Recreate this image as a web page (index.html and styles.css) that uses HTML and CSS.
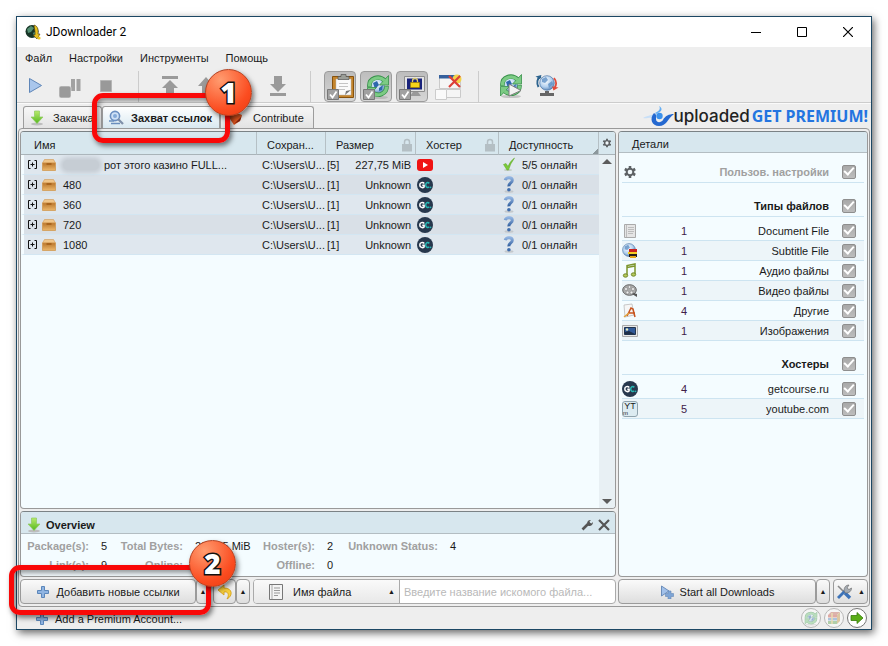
FILE: index.html
```html
<!DOCTYPE html>
<html lang="ru">
<head>
<meta charset="utf-8">
<title>JDownloader 2</title>
<link rel="stylesheet" href="styles.css">
</head>
<body>
<svg class="defs" aria-hidden="true">
  <defs>
    <linearGradient id="gGreen" x1="0" y1="0" x2="0" y2="1"><stop offset="0" stop-color="#b8ea6c"/><stop offset="1" stop-color="#55b81e"/></linearGradient>
    <linearGradient id="gBox" x1="0" y1="0" x2="0" y2="1"><stop offset="0" stop-color="#b9752a"/><stop offset="1" stop-color="#ecb86c"/></linearGradient>
    <linearGradient id="gBlue" x1="0" y1="0" x2="0" y2="1"><stop offset="0" stop-color="#8fb2e0"/><stop offset="1" stop-color="#33609f"/></linearGradient>
    <radialGradient id="gGlobe" cx=".4" cy=".35" r=".7"><stop offset="0" stop-color="#fff"/><stop offset=".6" stop-color="#b3d0ee"/><stop offset="1" stop-color="#5580b4"/></radialGradient>
    <symbol id="down" viewBox="0 0 14 16"><ellipse cx="7" cy="14" rx="6" ry="1.5" fill="#bdbdbd"/><path d="M4.500 1h5v6H13l-6 6.500L1 7h3.500z" fill="url(#gGreen)" stroke="#8cc860" stroke-width=".7"/></symbol>
    <symbol id="box" viewBox="0 0 14 14"><path d="M2.500 1.500h9l2 3.500H.5z" fill="#f0c68a" stroke="#d09b58" stroke-width=".6"/><path d="M.5 5h13v7.500H.5z" fill="url(#gBox)" stroke="#cf9347" stroke-width=".7"/><path d="M4.500 5h5v2h-5z" fill="#a8641d"/></symbol>
    <symbol id="expand" viewBox="0 0 9 9"><path d="M2.500.5H.5v8h2M6.500.5h2v8h-2M2.500 4.500h4M4.500 2.500v4" fill="none" stroke="#111"/></symbol>
    <symbol id="gc" viewBox="0 0 16 16"><circle cx="8" cy="8" r="8" fill="#27384d"/><path d="M7.300 6.400C5.700 4.700 2.800 5.500 2.800 8s2.900 3.300 4.300 1.900V8.200H5.300" fill="none" stroke="#fff" stroke-width="1.500"/><path d="M12.300 6.400C10.800 4.700 8.700 5.700 8.700 8s2.100 3.300 3.600 1.700" fill="none" stroke="#28b5b2" stroke-width="1.600"/><circle cx="13.600" cy="10.400" r=".8" fill="#28b5b2"/></symbol>
    <symbol id="help" viewBox="0 0 12 17"><ellipse cx="6" cy="15.500" rx="4.500" ry="1.200" fill="#c3c8cc"/><path d="M2.200 4.200C3 1 9.300 1 9.300 4.300c0 2.700-3.600 2.700-3.400 6" fill="none" stroke="url(#gBlue)" stroke-width="3"/><circle cx="5.900" cy="13.700" r="1.800" fill="#3f6cab"/></symbol>
    <symbol id="lock" viewBox="0 0 12 14"><path d="M3.500 7V4a2.500 2.500 0 0 1 5 0v3" fill="none" stroke="#b4bfc4" stroke-width="1.500"/><path d="M1 6h10v7.500H1z" fill="#b4bfc4"/></symbol>
    <symbol id="gear" viewBox="0 0 14 14"><path d="M7 1v12M1.800 4l10.400 6M12.200 4L1.800 10" stroke="#5d6164" stroke-width="2.600"/><circle cx="7" cy="7" r="4.300" fill="#5d6164"/><circle cx="7" cy="7" r="2.300" fill="#f0f7fa"/></symbol>
    <symbol id="plus" viewBox="0 0 14 14"><path d="M5.500 1.500h3v4h4v3h-4v4h-3v-4h-4v-3h4z" fill="#8fb4e2" stroke="#5b86ba"/></symbol>
    <symbol id="globe" viewBox="0 0 16 16"><circle cx="8" cy="8" r="7.300" fill="url(#gGlobe)" stroke="#4a76a8" stroke-width=".7"/><path d="M3 4l4-2 2 3-3 3-3-1zM9 9l4-3 1 3-4 4z" fill="#5c8fc4" opacity=".8"/></symbol>
    <symbol id="sync" viewBox="0 0 24 26"><ellipse cx="12" cy="23.500" rx="10" ry="1.600" fill="#aaa" opacity=".6"/><circle cx="12" cy="12" r="7" fill="url(#gGlobe)"/><path d="M7 9l4-2 2 4-4 4zM13 14l4-3-1 5-3 1z" fill="#2e68ad"/><g fill="none" stroke="#37904a" stroke-width="4.600"><path d="M3.500 13C2.500 3.500 13 1 18.500 6.500"/><path d="M20.500 12c.5 8-9 11.500-15 6"/></g><path d="M22.500 1.500v9.500h-9zM1.500 23v-9.500h9z" fill="#7ccb84" stroke="#37904a" stroke-width=".8"/><g fill="none" stroke="#7ccb84" stroke-width="3.200"><path d="M3.500 12.500C3 4 13 1.500 18.500 6.500"/><path d="M20.500 12.500c0 7.500-9 11-15 5.500"/></g></symbol>
  </defs>
</svg>

<main class="window">
  <header class="titlebar">
    <svg class="logo" viewBox="0 0 16 16"><circle cx="7" cy="7.500" r="6.500" fill="#173526"/><path d="M2 5l4-3 3 2-3 4-3 1zM8 9l3-2 1 3-3 3z" fill="#548f72"/><path d="M9 1c4 1 4.500 5 4 9h2l-3 5-4-4h2c.6-4-1-7-1-10z" fill="#e8c220" stroke="#44380c" stroke-width=".6"/><circle cx="14" cy="14" r="1.600" fill="#ebc524"/></svg>
    <h1>JDownloader 2</h1>
    <div class="wincontrols">
      <button aria-label="Minimize"><svg viewBox="0 0 10 10"><path d="M0 5.500h10" stroke="#000"/></svg></button>
      <button aria-label="Maximize"><svg viewBox="0 0 10 10"><path d="M.5.5h9v9h-9z" fill="none" stroke="#000"/></svg></button>
      <button aria-label="Close"><svg viewBox="0 0 10 10"><path d="M0 0l10 10M10 0L0 10" stroke="#000" stroke-width="1.200"/></svg></button>
    </div>
  </header>
  <nav class="menu"><a href="#">Файл</a><a href="#">Настройки</a><a href="#">Инструменты</a><a href="#">Помощь</a></nav>

  <div class="toolbar">
    <button aria-label="Start"><svg width="16" height="18" viewBox="0 0 16 18"><path d="M1.500 1.500v14L13.500 8.500z" fill="#a9c6ec" stroke="#5f86b8"/></svg></button>
    <button class="low" aria-label="Pause"><svg width="24" height="22" viewBox="0 0 24 22"><path d="M13 2h4v12h-4zM18.500 2h4v12h-4z" fill="#a2a2a2"/><rect x="1" y="9" width="12" height="12" rx="2" fill="#9a9a9a" stroke="#eee" stroke-width=".6"/></svg></button>
    <button aria-label="Stop"><svg width="12" height="12" viewBox="0 0 12 12"><path d="M.5.5h11v11H.5z" fill="#999" stroke="#b5b5b5"/></svg></button>
    <span class="sep"></span>
    <button aria-label="Move to top"><svg width="20" height="22" viewBox="0 0 20 22"><path d="M2 1h16v3H2zM10 5l8 8h-4v8H6v-8H2z" fill="#9a9a9a"/></svg></button>
    <button aria-label="Move up"><svg width="20" height="22" viewBox="0 0 20 22"><path d="M10 2l8 9h-4v9H6v-9H2z" fill="#9a9a9a"/></svg></button>
    <button aria-label="Move down"><svg width="20" height="22" viewBox="0 0 20 22"><path d="M6 2h8v9h4l-8 9-8-9h4z" fill="#9a9a9a"/></svg></button>
    <button aria-label="Move to bottom"><svg width="20" height="22" viewBox="0 0 20 22"><path d="M6 1h8v8h4l-8 8-8-8h4zM2 18h16v3H2z" fill="#9a9a9a"/></svg></button>
    <span class="sep"></span>
    <button class="toggle on" aria-label="Clipboard"><svg viewBox="0 0 30 29"><path d="M7.500 4.500h21v21h-21z" fill="#c5852c" stroke="#86520e"/><path d="M11 7h15v16H11z" fill="#fafafa" stroke="#bbb" stroke-width=".5"/><path d="M14 11.500h9M14 14.500h9M14 17.500h6" stroke="#c4c4c4"/><path d="M20 23l6-5-5 1z" fill="#777"/><path d="M13 4.500h3v-2h5v2h3v3H13z" fill="#9b9e98" stroke="#555" stroke-width=".7"/><path d="M2.500 17.500h11v10h-11z" fill="#a1a1a1" stroke="#787878"/><path d="M5 22.500l2.500 3 4-6" fill="none" stroke="#fff" stroke-width="1.800"/></svg></button>
    <button class="toggle on" aria-label="Auto reconnect"><svg viewBox="0 0 30 29"><use href="#sync" x="5" y="2" width="24" height="26"/><path d="M2.500 17.500h11v10h-11z" fill="#a1a1a1" stroke="#787878"/><path d="M5 22.500l2.500 3 4-6" fill="none" stroke="#fff" stroke-width="1.800"/></svg></button>
    <button class="toggle on" aria-label="Premium lock"><svg viewBox="0 0 30 29"><path d="M7.500 4.500h20v15h-20z" fill="#e4e4e4" stroke="#8d8d8d"/><path d="M10 6.500h15v11H10z" fill="#1a237b"/><path d="M16 20h5l3 4H13z" fill="#999"/><path d="M15.500 10.500V9a2.500 2.500 0 0 1 5 0v1.500" fill="none" stroke="#d9ca72" stroke-width="1.300"/><path d="M13.500 10.500h9v5h-9z" fill="#f6d31a" stroke="#a58200" stroke-width=".7"/><path d="M2.500 17.500h11v10h-11z" fill="#a1a1a1" stroke="#787878"/><path d="M5 22.500l2.500 3 4-6" fill="none" stroke="#fff" stroke-width="1.800"/></svg></button>
    <button class="toggle" aria-label="Silent mode"><svg viewBox="0 0 30 29"><path d="M6.500 4.500h21v12h-21zM13.500 17.500h14v8h-14z" fill="#f5f5f5" stroke="#cacaca"/><path d="M6 3h21v3.500H6z" fill="#35609d"/><circle cx="24" cy="7" r="4.500" fill="#f3d24a"/><path d="M16 4l11 11M27 4L16 15" stroke="#dc3f38" stroke-width="2.200"/><path d="M2.500 17.500h11v10h-11z" fill="#fafafa" stroke="#ccc"/></svg></button>
    <span class="sep"></span>
    <button class="big" aria-label="Reconnect"><svg width="24" height="26" viewBox="0 0 24 26"><use href="#sync" width="24" height="26"/><path d="M10 11v12l12-5.500z" fill="#f2f2f2" stroke="#7d7d7d"/></svg></button>
    <button class="big" aria-label="Update"><svg width="24" height="24" viewBox="0 0 24 24"><use href="#globe" x="4" y="1" width="16" height="16"/><path d="M10 17h4v2h5v3H5v-3h5z" fill="#666"/><path d="M6 2.500C2 4.500 1.500 9 3.500 13" fill="none" stroke="#2d638e" stroke-width="2"/><path d="M.5 2.500l6-1.500-1.500 4z" fill="#2d638e"/><path d="M19 4c2.500 3 2.500 7 .5 10" fill="none" stroke="#e14b3b" stroke-width="1.800"/><path d="M17 12.500l6.500 1-5 3z" fill="#e14b3b"/></svg></button>
  </div>

  <div class="tabs">
    <button class="tab first"><svg width="14" height="16"><use href="#down"/></svg><span>Закачка</span></button>
    <div class="tabwrap">
      <button class="tab active"><svg width="16" height="16" viewBox="0 0 16 16"><path d="M1 11h5M3 13.500h9" stroke="#6a8ebd" stroke-width="1.500"/><circle cx="7" cy="6" r="4.600" fill="#cfe1f6" stroke="#6b8fc1" stroke-width="1.600"/><circle cx="7" cy="6" r="2" fill="#84a9d8"/><path d="M10 9l5 5" stroke="#7f90a9" stroke-width="2.300"/></svg><span>Захват ссылок</span></button>
      <span class="ring ring-tab"></span><span class="badge badge-tab">1</span>
    </div>
    <button class="tab last"><svg width="14" height="14" viewBox="0 0 14 14"><path d="M1 2l5-1 7 3-2 6-6 4-4-6z" fill="#e4571f"/><path d="M5 13l7-7 1-2-2 6z" fill="#7b2511"/></svg><span>Contribute</span></button>
    <a class="banner" href="#"><svg width="32" height="22" viewBox="0 0 32 22"><path d="M0 13c5-3 7-2 11-4l-1 4c-4-1-6 1-10 0z" fill="#c8dff7"/><path d="M11 8c-5 6-2 13 5 13 8 0 8-7 15-12-5 0-9 2-11 6-2 3-7 3-7-1 0-3 1-4-2-6z" fill="#2468d0"/><circle cx="16.500" cy="11" r="3.200" fill="#3c91ec"/><path d="M12 8c4-2 6-4 4-7 5 3 2 6-3 8z" fill="#64aef4"/></svg><span class="brand">uploaded</span><span class="promo">GET PREMIUM!</span></a>
  </div>

  <div class="frame">
    <div class="left">
      <section class="panel links">
        <div class="tablebox">
          <table>
            <colgroup><col><col class="c-save"><col class="c-size"><col class="c-host"><col class="c-state"></colgroup>
            <thead><tr><th>Имя</th><th>Сохран...</th><th><span class="hcell">Размер<svg width="12" height="14"><use href="#lock"/></svg></span></th><th><span class="hcell">Хостер<svg width="12" height="14"><use href="#lock"/></svg></span></th><th class="sorted">Доступность</th></tr></thead>
            <tbody>
              <tr><td><span class="name"><svg width="9" height="9"><use href="#expand"/></svg><svg width="14" height="14"><use href="#box"/></svg><span class="label"><i class="smudge"></i>рот этого казино FULL...</span></span></td><td>C:\Users\U...</td><td><span class="size"><span>[5]</span><span>227,75 MiB</span></span></td><td class="host"><svg width="16" height="16" viewBox="0 0 16 16"><rect y="2" width="16" height="12" rx="3" fill="#f01414"/><path d="M6 5l5 3-5 3z" fill="#fff"/></svg></td><td><span class="state"><svg width="12" height="17" viewBox="0 0 12 17"><ellipse cx="5" cy="14" rx="4" ry="1" fill="#c2ccc2"/><path d="M.5 8.500L3 7.500l2 3Q7 5 11.500 2 7 8 5.500 14H4z" fill="#7ccb38" stroke="#59a522" stroke-width=".5"/></svg>5/5 онлайн</span></td></tr>
              <tr><td><span class="name"><svg width="9" height="9"><use href="#expand"/></svg><svg width="14" height="14"><use href="#box"/></svg><span class="label">480</span></span></td><td>C:\Users\U...</td><td><span class="size"><span>[1]</span><span>Unknown</span></span></td><td class="host"><svg width="16" height="16"><use href="#gc"/></svg></td><td><span class="state"><svg width="12" height="17"><use href="#help"/></svg>0/1 онлайн</span></td></tr>
              <tr><td><span class="name"><svg width="9" height="9"><use href="#expand"/></svg><svg width="14" height="14"><use href="#box"/></svg><span class="label">360</span></span></td><td>C:\Users\U...</td><td><span class="size"><span>[1]</span><span>Unknown</span></span></td><td class="host"><svg width="16" height="16"><use href="#gc"/></svg></td><td><span class="state"><svg width="12" height="17"><use href="#help"/></svg>0/1 онлайн</span></td></tr>
              <tr><td><span class="name"><svg width="9" height="9"><use href="#expand"/></svg><svg width="14" height="14"><use href="#box"/></svg><span class="label">720</span></span></td><td>C:\Users\U...</td><td><span class="size"><span>[1]</span><span>Unknown</span></span></td><td class="host"><svg width="16" height="16"><use href="#gc"/></svg></td><td><span class="state"><svg width="12" height="17"><use href="#help"/></svg>0/1 онлайн</span></td></tr>
              <tr><td><span class="name"><svg width="9" height="9"><use href="#expand"/></svg><svg width="14" height="14"><use href="#box"/></svg><span class="label">1080</span></span></td><td>C:\Users\U...</td><td><span class="size"><span>[1]</span><span>Unknown</span></span></td><td class="host"><svg width="16" height="16"><use href="#gc"/></svg></td><td><span class="state"><svg width="12" height="17"><use href="#help"/></svg>0/1 онлайн</span></td></tr>
            </tbody>
          </table>
        </div>
        <div class="scroll">
          <button class="colgear" aria-label="Columns"><svg width="10" height="10"><use href="#gear"/></svg></button>
          <svg width="10" height="5" viewBox="0 0 10 5"><path d="M5 0l5 5H0z" fill="#5b5b5b"/></svg>
          <svg class="bottom" width="10" height="5" viewBox="0 0 10 5"><path d="M0 0h10L5 5z" fill="#5b5b5b"/></svg>
        </div>
      </section>
      <section class="panel overview">
        <h2><svg width="14" height="16"><use href="#down"/></svg><span>Overview</span>
          <button aria-label="Settings"><svg width="12" height="12" viewBox="0 0 12 12"><path d="M1.500 10.500L7 5" stroke="#555" stroke-width="2.600"/><path d="M6 5c0-3 2-4.500 4-4L8.500 2.500l.6 1.300 1.300.6L12 3c0 3-2 4.500-4.500 4z" fill="#555"/></svg></button>
          <button aria-label="Close overview"><svg width="12" height="12" viewBox="0 0 12 12"><path d="M1 1l10 10M11 1L1 11" stroke="#555" stroke-width="2.200"/></svg></button></h2>
        <div class="stats">
          <b>Package(s):</b><span>5</span><b>Total Bytes:</b><span>227,75 MiB</span><b>Hoster(s):</b><span>2</span><b>Unknown Status:</b><span>4</span>
          <b>Link(s):</b><span>9</span><b>Online:</b><span>5</span><b>Offline:</b><span>0</span>
        </div>
      </section>
      <div class="actions">
        <div class="addgroup">
          <button class="btn add"><svg width="14" height="14"><use href="#plus"/></svg>Добавить новые ссылки</button><button class="btn up" aria-label="More add options">▲</button>
          <span class="ring ring-add"></span><span class="badge badge-add">2</span>
        </div>
        <div class="undogroup"><button class="btn undo" aria-label="Undo"><svg width="16" height="16" viewBox="0 0 16 16"><path d="M7 1L1 6l6 5V8c3-.6 5 1 4 5l-1 2c6-3 6-11-3-11z" fill="#f7cf3c" stroke="#d09b13" stroke-width=".8"/></svg></button><button class="btn up" aria-label="More undo options">▲</button></div>
        <div class="search">
          <label class="kind"><svg width="14" height="16" viewBox="0 0 14 16"><path d="M.5.500h13v15H.5z" fill="#f4f4f4" stroke="#777"/><path d="M3 1v14" stroke="#aaa"/><path d="M5 4h6M5 6.500h6M5 9h6M5 11.500h4" stroke="#999"/></svg><select aria-label="Поле поиска"><option>Имя файла</option></select><span>▲</span></label>
          <input type="text" aria-label="Поиск" placeholder="Введите название искомого файла...">
        </div>
      </div>
    </div>

    <div class="right">
      <section class="panel details">
        <h2>Детали</h2>
        <div class="filters">
          <label class="row head muted"><svg width="14" height="14"><use href="#gear"/></svg><span class="t">Пользов. настройки</span><input type="checkbox" checked></label>
          <label class="row head"><span class="t">Типы файлов</span><input type="checkbox" checked></label>
          <label class="row lead"><svg width="16" height="16" viewBox="0 0 16 16"><path d="M2.500 1.500h11v13h-11z" fill="#e5e5e5" stroke="#aaa"/><path d="M4.500 2v12M6 4.500h6M6 6.500h6M6 8.500h6M6 10.500h5" stroke="#bdbdbd"/></svg><span class="n">1</span><span class="t">Document File</span><input type="checkbox" checked></label>
          <label class="row alt"><svg width="16" height="16" viewBox="0 0 16 16"><use href="#globe" width="14" height="14"/><path d="M7 6h8v3H7z" fill="#c9201f"/><path d="M6 9h9v2H6z" fill="#f5cc24"/><path d="M7 11h8v3H7z" fill="#251c1c"/><path d="M8 13h6v2H8z" fill="#e5a81c"/></svg><span class="n">1</span><span class="t">Subtitle File</span><input type="checkbox" checked></label>
          <label class="row"><svg width="16" height="16" viewBox="0 0 16 16"><path d="M5 12V2.500L13 1v10M5 4.500L13 3" fill="none" stroke="#7c952e" stroke-width="1.500"/><ellipse cx="3.500" cy="12.500" rx="2.200" ry="1.700" fill="#b5c95b" stroke="#71882a"/><ellipse cx="11.500" cy="11.500" rx="2.200" ry="1.700" fill="#b5c95b" stroke="#71882a"/></svg><span class="n">1</span><span class="t">Аудио файлы</span><input type="checkbox" checked></label>
          <label class="row alt"><svg width="16" height="16" viewBox="0 0 16 16"><ellipse cx="7.500" cy="7" rx="6.800" ry="5.300" fill="#aaa" stroke="#666"/><g fill="#eee" stroke="#777" stroke-width=".5"><circle cx="4" cy="6" r="1.500"/><circle cx="7.500" cy="4" r="1.300"/><circle cx="11" cy="6" r="1.500"/><circle cx="5.500" cy="9.500" r="1.400"/><circle cx="9.500" cy="9.500" r="1.400"/></g><path d="M10 11l5 3v-3l-3-1z" fill="#555"/></svg><span class="n">1</span><span class="t">Видео файлы</span><input type="checkbox" checked></label>
          <label class="row"><svg width="16" height="16" viewBox="0 0 16 16"><path d="M2 2l8-1 2 11-9 2z" fill="#f6f6f6" stroke="#bbb" stroke-width=".8"/><path d="M5 13l4-8 2 1 2 8M6 10h7" fill="none" stroke="#c8541e" stroke-width="1.500"/><path d="M2 14l5-4" stroke="#dfa33c" stroke-width="1.500"/></svg><span class="n">4</span><span class="t">Другие</span><input type="checkbox" checked></label>
          <label class="row alt"><svg width="16" height="16" viewBox="0 0 16 16"><path d="M.5 2.500h15v11H.5z" fill="#e8e8e8" stroke="#aaa"/><path d="M2.500 4.500h11v7h-11z" fill="#315a99" stroke="#22354e"/><path d="M3 9l4-1 6 3H3z" fill="#1e2f49"/><circle cx="5" cy="6.500" r="1.200" fill="#e9edbd"/></svg><span class="n">1</span><span class="t">Изображения</span><input type="checkbox" checked></label>
          <label class="row head"><span class="t">Хостеры</span><input type="checkbox" checked></label>
          <label class="row lead"><svg width="16" height="16"><use href="#gc"/></svg><span class="n">4</span><span class="t">getcourse.ru</span><input type="checkbox" checked></label>
          <label class="row alt"><span class="ytlogo"><span>YT</span><small>m</small></span><span class="n">5</span><span class="t">youtube.com</span><input type="checkbox" checked></label>
        </div>
      </section>
      <div class="actions">
        <div class="startgroup"><button class="btn start"><svg width="14" height="14" viewBox="0 0 14 14"><path d="M1.500 1v10L9 6z" fill="#a2c1ea" stroke="#6b8dba"/><path d="M8 6h3v2.500h2.500v3H11V14H8v-2.500H5.500v-3H8z" fill="#7ea5d6" stroke="#6588b5" stroke-width=".6"/></svg>Start all Downloads</button><button class="btn up" aria-label="More start options">▲</button></div>
        <button class="btn tools" aria-label="Tools"><svg width="16" height="16" viewBox="0 0 16 16"><path d="M2 2l8 8" stroke="#888" stroke-width="1.600"/><path d="M9 9l5 5" stroke="#3d73b8" stroke-width="3.400"/><path d="M2 14l8-8" stroke="#3d73b8" stroke-width="2.800"/><path d="M8 7c0-4 2-6 5-6l-2 3 2 1.500L15.500 4c0 3-2 5-6 5z" fill="#a6acb3" stroke="#666" stroke-width=".6"/></svg><span>▲</span></button>
      </div>
    </div>
  </div>

  <footer class="status">
    <button class="premium"><svg width="14" height="14"><use href="#plus"/></svg>Add a Premium Account...</button>
    <span class="dot faded"><svg width="14" height="15"><use href="#sync"/></svg></span>
    <span class="dot faded"><svg width="14" height="14" viewBox="0 0 14 14"><path d="M4 1h9l-3 3H1z" fill="#c76d5e"/><path d="M1 4h9v2.500H1z" fill="#cf584d"/><path d="M1 7h9v2.500H1z" fill="#5e93c9"/><path d="M1 10h9v3H1z" fill="#67a857"/><path d="M10 4l3-3v9l-3 3z" fill="#c89a47"/><path d="M5 2v11" stroke="#e7c76b" stroke-width="1.500"/></svg></span>
    <span class="dot"><svg width="14" height="14" viewBox="0 0 14 14"><path d="M1 4.500h6V1.500L13 7l-6 5.500v-3H1z" fill="#59ad16" stroke="#397b0b" stroke-width=".8"/></svg></span>
  </footer>
</main>
</body>
</html>
```
FILE: styles.css
```css
* { box-sizing: border-box; }
body {
  margin: 0;
  padding: 16px;
  min-height: 100vh;
  display: flex;
  background: #fff;
  color: #1a1a1a;
  font: 11px/14px "Liberation Sans", Arial, sans-serif;
}
.defs { position: absolute; width: 0; height: 0; }
svg { flex: none; display: block; }
button { border: 0; padding: 0; margin: 0; background: none; color: inherit; font: inherit; }
a { color: inherit; text-decoration: none; }
h1, h2 { margin: 0; }

.window {
  flex: 1;
  min-width: 0;
  display: flex;
  flex-direction: column;
  border: 1px solid #1c4764;
  background: #eee;
  box-shadow: 2px 3px 8px rgba(0, 0, 0, .6);
}
.titlebar { display: flex; align-items: center; height: 30px; padding-left: 8px; background: #fff; }
.titlebar h1 { flex: 1; margin-left: 5px; color: #000; font: 12px/16px Roboto, sans-serif; }
.logo { width: 16px; height: 16px; }
.wincontrols { display: flex; }
.wincontrols button { width: 46px; height: 30px; display: grid; place-items: center; }
.wincontrols svg { width: 10px; height: 10px; }
.menu { display: flex; gap: 17px; padding: 4px 8px 5px; }

.toolbar {
  display: flex;
  align-items: center;
  height: 33px;
  padding: 0 9px;
  border-bottom: 1px solid #ccc;
}
.toolbar button { width: 36px; height: 31px; display: grid; place-items: center; }
.toolbar button.low { padding-top: 4px; }
.toolbar button:first-child { width: 20px; margin-right: 6px; }
.toolbar .sep { width: 1px; height: 31px; margin: 0 13px 0 14px; background: #ccc; }
.toolbar .toggle { width: 32px; margin-right: 4px; }
.toolbar .toggle + .sep { margin: 0 14px 0 10px; }
.toolbar .toggle svg { width: 30px; height: 29px; }
.toolbar .on { border: 1px solid #9c9c9c; border-radius: 4px; background: linear-gradient(#bdbdbd, #d6d6d6); }

.tabs { display: flex; align-items: flex-end; height: 25px; padding: 0 3px 0 6px; border-top: 1px solid #fafafa; }
.tab {
  display: flex;
  align-items: center;
  height: 22px;
  padding: 0 8px;
  border: 1px solid #9c9c9c;
  border-bottom: 0;
  border-radius: 3px 3px 0 0;
  background: linear-gradient(#f7f7f7, #e3e3e3);
}
.tab.first { width: 79px; padding: 0 6px; gap: 9px; }
.tab.active { width: 118px; padding: 0 5px; gap: 7px; background: linear-gradient(#fff, #d9e9f1); font-weight: bold; }
.tab.last { width: 94px; gap: 10px; }
.tab span { white-space: nowrap; }
.tabwrap { position: relative; }
.banner { display: flex; align-items: center; margin-left: auto; height: 24px; }
.brand { margin-left: -1px; color: #222; font: 500 17px/22px Inter, sans-serif; }
.promo { margin-left: 2px; color: #2475e0; font: bold 16px/22px "Noto Sans", sans-serif; }

.ring {
  position: absolute;
  z-index: 3;
  border: 5px solid #f90808;
  border-radius: 11px;
  box-shadow: 2px 3px 5px rgba(0, 0, 0, .5), inset 2px 3px 5px rgba(0, 0, 0, .4);
  pointer-events: none;
}
.ring-tab { inset: -13px -10px -15px; }
.ring-add { inset: -14px -1px -11px -11px; }
.badge {
  position: absolute;
  z-index: 4;
  width: 47px;
  height: 47px;
  border: 1px solid #b3401f;
  border-radius: 50%;
  background: radial-gradient(circle at 32% 22%, #ff9c70, #fb4c20 65%, #e83a10);
  box-shadow: 2px 3px 5px rgba(0, 0, 0, .5);
  color: #fff;
  font: 800 28px/45px "Open Sans", sans-serif;
  text-align: center;
  -webkit-text-stroke: 3px #111;
  paint-order: stroke fill;
}
.badge-tab { top: -37px; right: -32px; }
.badge-add { top: -39px; right: -26px; }

.frame {
  flex: 1;
  display: flex;
  gap: 2px;
  margin: 0 1px;
  padding: 2px 1px;
  border: 1px solid #999;
  border-radius: 4px;
  background: #eee;
}
.left, .right { display: flex; flex-direction: column; gap: 2px; min-width: 0; }
.left { flex: 1; }
.right { width: 250px; }
.panel { border: 1px solid #999; border-top-color: #7b8285; border-radius: 4px; background: #f4fcff; overflow: hidden; }
.links { flex: 1; display: flex; }
.tablebox { flex: 1; min-width: 0; }
table { width: 100%; table-layout: fixed; border-spacing: 0; }
.c-save { width: 69px; }
.c-size { width: 90px; }
.c-host { width: 83px; }
.c-state { width: 100px; }
th {
  height: 23px;
  padding: 3px 0 0 10px;
  border-right: 1px solid #b5c0c5;
  border-bottom: 1px solid #a9b3b8;
  background: #d7e7ee;
  text-align: left;
  font-weight: normal;
  white-space: nowrap;
}
th:first-child { padding-left: 13px; }
.sorted { background: linear-gradient(135deg, transparent 50%, #8c979c 50%) no-repeat right bottom / 5px 5px #d7e7ee; }
.hcell { display: flex; justify-content: space-between; padding-right: 2px; }
td { height: 20px; padding: 0 0 0 5px; border-bottom: 1px solid #d3e6f2; background: #dfe7ee; white-space: nowrap; }
tbody tr:nth-child(even) td { background: #d9e0e7; }
td:first-child { border-left: 3px solid #f4fcff; padding-left: 4px; }
td:last-child { padding-left: 4px; }
.name { display: flex; align-items: center; }
.name svg + svg { margin-left: 5px; }
.label { display: flex; align-items: center; margin-left: 7px; }
.smudge { width: 36px; height: 10px; margin-right: 5px; border-radius: 5px; background: #c6cdd4; box-shadow: 0 0 4px 3px #c6cdd4; }
.size { display: flex; justify-content: space-between; margin: 0 5px 0 -4px; }
td.host { padding-left: 1px; }
.state { display: flex; align-items: center; gap: 7px; }
.scroll { width: 16px; display: flex; flex-direction: column; align-items: center; gap: 4px; background: #e8f0f4; padding-bottom: 4px; }
.colgear { width: 16px; height: 23px; display: grid; place-items: center; background: #d7e7ee; border-bottom: 1px solid #a9b3b8; }
.scroll .bottom { margin-top: auto; }

.overview h2, .details h2 { display: flex; align-items: center; height: 21px; background: #d7e7ee; border-bottom: 1px solid #b3bdc2; }
.overview h2 { height: 22px; padding: 4px 5px 0 6px; gap: 5px; font-size: 11px; }
.overview h2 span { flex: 1; }
.stats {
  display: grid;
  grid-template-columns: 64px 6px 64px 53px 55px 6px 93px 6px;
  gap: 5px 12px;
  padding: 5px 4px 4px;
  white-space: nowrap;
}
.stats b { color: #a0a0a0; text-align: right; }

.actions { display: flex; gap: 3px; }
.addgroup { position: relative; display: flex; }
.undogroup, .startgroup { display: flex; }
.btn {
  display: flex;
  align-items: center;
  justify-content: center;
  height: 25px;
  border: 1px solid #9b9b9b;
  border-radius: 4px;
  background: linear-gradient(#fafafa, #dedede);
}
.add { width: 176px; gap: 6px; }
.up { width: 14px; font-size: 7px; }
.undo { width: 23px; }
.search { flex: 1; min-width: 0; display: flex; height: 25px; border: 1px solid #aaa; border-radius: 4px; background: #fff; overflow: hidden; }
.kind { width: 146px; display: flex; align-items: center; padding: 0 4px 0 15px; border-right: 1px solid #aaa; background: linear-gradient(#fafafa, #e8e8e8); }
.kind select { flex: 1; min-width: 0; margin-left: 10px; border: 0; padding: 0; background: none; appearance: none; color: inherit; font: inherit; }
.kind span, .tools span { font-size: 7px; }
.search input { flex: 1; min-width: 0; border: 0; padding: 0 4px; background: none; font: inherit; }
.search input::placeholder { color: #b9b9b9; }

.details { flex: 1; }
.details h2 { padding: 3px 0 0 13px; font: inherit; }
.filters { padding: 0 3px; }
.row { display: flex; align-items: center; height: 20px; padding: 0 8px 0 0; border-bottom: 1px solid #cde4f1; }
.row.alt { background: #edf5f9; }
.row > svg { width: 16px; }
.row .n { width: 88px; text-align: center; padding-left: 4px; color: #402048; }
.row .t { flex: 1; padding-right: 13px; text-align: right; white-space: nowrap; }
.row.head { height: 34px; padding-top: 12px; font-weight: bold; }
.row.head:first-child { height: 30px; padding-top: 8px; }
.row.muted { color: #a0a0a0; }
.row.lead { height: 24px; padding-top: 4px; }
.row input {
  width: 14px;
  height: 14px;
  margin: 0;
  appearance: none;
  border: 1px solid #8e8e8e;
  border-radius: 2px;
  background: linear-gradient(#a8a8a8, #bdbdbd);
  display: grid;
  place-items: center;
}
.row input:checked::before { content: ""; width: 8px; height: 4px; margin-bottom: 3px; border: solid #fff; border-width: 0 0 2px 2px; transform: rotate(-48deg); }
.ytlogo {
  display: flex;
  flex-direction: column;
  width: 16px;
  height: 16px;
  border: 1px solid #8fa3ad;
  border-radius: 3px;
  background: #dcebf1;
  font-size: 9px;
  line-height: 9px;
  text-align: center;
}
.ytlogo small { font-size: 6px; line-height: 5px; text-align: left; }
.startgroup { flex: 1; }
.start { flex: 1; gap: 6px; }
.tools { width: 35px; gap: 6px; }

.status { display: flex; align-items: center; gap: 3px; height: 22px; padding: 0 4px 0 18px; }
.premium { display: flex; align-items: center; gap: 6px; margin-right: auto; padding-top: 2px; }
.dot { width: 20px; height: 20px; display: grid; place-items: center; border: 1px solid #777; border-radius: 50%; background: #fff; }
.faded { opacity: .45; }
```
